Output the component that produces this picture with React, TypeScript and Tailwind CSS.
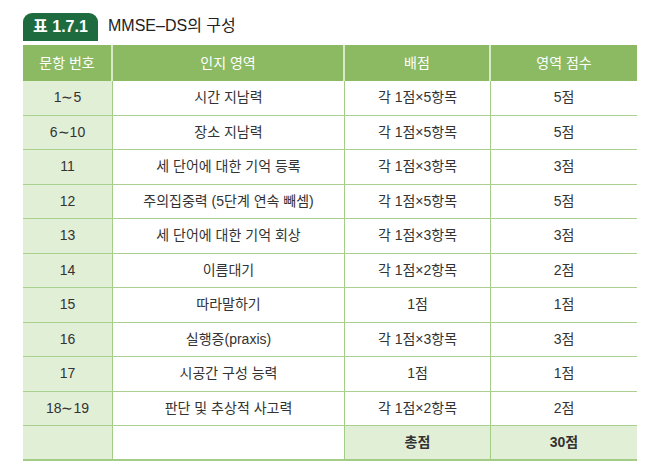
import React from "react";

const rows: [string, string, string, string][] = [
  ["1∼5", "시간 지남력", "각 1점×5항목", "5점"],
  ["6∼10", "장소 지남력", "각 1점×5항목", "5점"],
  ["11", "세 단어에 대한 기억 등록", "각 1점×3항목", "3점"],
  ["12", "주의집중력 (5단계 연속 빼셈)", "각 1점×5항목", "5점"],
  ["13", "세 단어에 대한 기억 회상", "각 1점×3항목", "3점"],
  ["14", "이름대기", "각 1점×2항목", "2점"],
  ["15", "따라말하기", "1점", "1점"],
  ["16", "실행증(praxis)", "각 1점×3항목", "3점"],
  ["17", "시공간 구성 능력", "1점", "1점"],
  ["18∼19", "판단 및 추상적 사고력", "각 1점×2항목", "2점"],
];

export default function App() {
  return (
    <div
      className="w-[664px] h-[475px] bg-white text-[#333]"
      style={{ fontFamily: '"Liberation Sans", "Noto Sans CJK KR", sans-serif' }}
    >
      <div className="pl-[23px] pt-[12px]">
        <div className="flex items-end gap-[10px]">
          <div className="h-[28px] w-[75px] rounded-t-[9px] bg-[#1f6b40] text-white font-bold text-[16px] flex items-center justify-center">
            표 1.7.1
          </div>
          <div className="text-[16px] text-[#222] leading-[28px] pb-[1px]">MMSE–DS의 구성</div>
        </div>
        <div className="mt-[4px] w-[614px] text-[14px]">
          <div className="grid grid-cols-[90px_232px_146px_146px] h-[36px] bg-[#8cba63] text-white">
            <div className="flex items-center justify-center border-r-2 border-[#d7eac8]">문항 번호</div>
            <div className="flex items-center justify-center border-r-2 border-[#d7eac8]">인지 영역</div>
            <div className="flex items-center justify-center border-r-2 border-[#d7eac8]">배점</div>
            <div className="flex items-center justify-center">영역 점수</div>
          </div>
          {rows.map((r, i) => (
            <div
              key={i}
              className="grid grid-cols-[90px_232px_146px_146px] h-[34.5px] border-b-[1.5px] border-[#a9d08e]"
            >
              <div className="flex items-center justify-center bg-[#e2efd7] border-r-[1.5px] border-[#a3cd87]">{r[0]}</div>
              <div className="flex items-center justify-center border-r-[1.5px] border-[#a3cd87]">{r[1]}</div>
              <div className="flex items-center justify-center border-r-[1.5px] border-[#a3cd87]">{r[2]}</div>
              <div className="flex items-center justify-center">{r[3]}</div>
            </div>
          ))}
          <div className="grid grid-cols-[90px_232px_146px_146px] h-[35px] border-b-[2px] border-[#a3cd87] font-bold">
            <div className="bg-[#e2efd7] border-r-[1.5px] border-[#a3cd87]"></div>
            <div className="border-r-[1.5px] border-[#a3cd87]"></div>
            <div className="flex items-center justify-center bg-[#e2efd7] border-r-[1.5px] border-[#a3cd87]">총점</div>
            <div className="flex items-center justify-center bg-[#e2efd7]">30점</div>
          </div>
        </div>
      </div>
    </div>
  );
}
